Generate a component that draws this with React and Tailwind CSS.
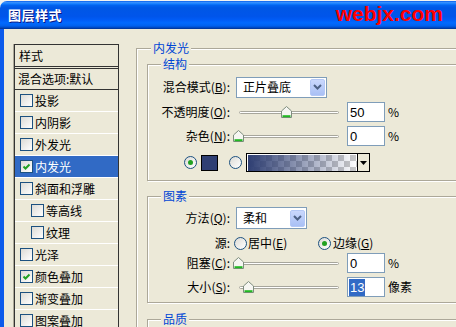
import React from 'react';

const items = [
  { t: '投影' },
  { t: '内阴影' },
  { t: '外发光' },
  { t: '内发光', checked: true, sel: true },
  { t: '斜面和浮雕' },
  { t: '等高线', indent: true },
  { t: '纹理', indent: true },
  { t: '光泽' },
  { t: '颜色叠加', checked: true },
  { t: '渐变叠加' },
  { t: '图案叠加' },
];

const Check = ({ checked }) => (
  <span className="flex h-[13px] w-[13px] shrink-0 items-center justify-center border border-[#1C5180] bg-[linear-gradient(135deg,#DCDBD5,#FFFFFF)]">
    {checked && (
      <svg width="9" height="9" viewBox="0 0 9 9">
        <path d="M1.5 4.5 L3.5 6.5 L7.5 2.5" fill="none" stroke="#21A121" strokeWidth="2" />
      </svg>
    )}
  </span>
);

const Radio = ({ checked, className = '' }) => (
  <span className={`flex h-[13px] w-[13px] shrink-0 items-center justify-center rounded-full border border-[#1C5180] bg-[linear-gradient(135deg,#DCDBD5,#FFFFFF)] ${className}`}>
    {checked && <span className="h-[5px] w-[5px] rounded-full bg-[#21A121]" />}
  </span>
);

const Key = ({ t, k }) => (
  <span>
    {t}(<u className="underline-offset-1">{k}</u>):
  </span>
);

const Group = ({ title, className = '', labelClass = 'ml-[13px]', children }) => (
  <div className={`shrink-0 border border-[#ACA899] shadow-[inset_1px_1px_0_#fff,1px_1px_0_#fff] ${className}`}>
    <div className={`-mt-[8px] h-[14px] w-fit bg-[#ECE9D8] px-[2px] leading-[14px] text-[#0046D5] ${labelClass}`}>{title}</div>
    {children}
  </div>
);

const Row = ({ label, className = '', children }) => (
  <div className={`flex items-center ${className}`}>
    <div className="w-[82px] shrink-0 text-right leading-none">{label}</div>
    {children}
  </div>
);

const Select = ({ value, className = '' }) => (
  <div className={`ml-[6px] flex shrink-0 items-center justify-between border border-[#7F9DB9] bg-white pl-[6px] pr-[1px] leading-none ${className}`}>
    <span>{value}</span>
    <span className="flex h-[17px] w-[15px] items-center justify-center rounded-[2px] border border-[#B4C8F6] bg-[linear-gradient(180deg,#CAD8FD,#A9C0F5)]">
      <svg width="9" height="6" viewBox="0 0 9 6">
        <path d="M1 1 L4.5 4.5 L8 1" fill="none" stroke="#4D6185" strokeWidth="2" />
      </svg>
    </span>
  </div>
);

const Slider = ({ pos }) => (
  <div className="relative ml-[6px] h-[12px] w-[111px] shrink-0">
    <div className="ml-[3px] mt-[5px] h-[3px] w-[100px] rounded-full border border-[#A7A69C] bg-white" />
    <svg className="absolute top-0" style={{ left: pos }} width="11" height="12" viewBox="0 0 11 12">
      <path d="M0.5 5 L5.5 0.5 L10.5 5 V11.5 H0.5 Z" fill="#F6F6F2" stroke="#7E8C7E" />
      <path d="M1.5 10.2 H9.5" stroke="#22B922" strokeWidth="2" />
    </svg>
  </div>
);

const Field = ({ value, selected, unit }) => (
  <>
    <div className="flex h-[20px] w-[38px] shrink-0 items-center border border-[#7F9DB9] bg-white pl-[1px] font-['Liberation_Sans',sans-serif] text-[13px] leading-none">
      <span className={selected ? 'bg-[#316AC5] px-[1px] py-[2px] text-white' : 'px-[1px]'}>{value}</span>
    </div>
    <span className="ml-[3px] leading-none">{unit}</span>
  </>
);

export default function App() {
  return (
    <div className="h-[327px] w-[456px] overflow-hidden bg-[#F2F2F0] font-['Noto_Sans_CJK_SC','Noto_Sans',sans-serif] text-[12px] text-black">
      <div className="mt-[1px] flex h-[28px] items-center justify-between rounded-tl-[7px] bg-[linear-gradient(180deg,#0A5FEB_0%,#3A93FF_6%,#127DFF_10%,#0262EE_16%,#0057E5_24%,#0055EB_56%,#005BF5_66%,#026AFE_78%,#0062EF_88%,#0052D6_93%,#0040AB_97%,#003092_100%)] pl-[8px] pr-[13px]">
        <span className="text-[13px] font-bold tracking-[0.5px] text-white [text-shadow:1px_1px_0_#0A1883]">图层样式</span>
        <span className="mt-[-3px] font-['Liberation_Sans',sans-serif] text-[21px] font-bold leading-none text-[#FF0000]">webjx.com</span>
      </div>

      <div className="flex h-[298px] items-start overflow-hidden border-l-4 border-[#0B5AEB] bg-[#ECE9D8]">
        <div className="ml-[10px] mt-[15px] w-[105px] shrink-0 border border-[#333] shadow-[-1px_0_0_#ACA899]">
          <div className="flex h-[22px] items-center border-b border-[#333] pl-[4px]">样式</div>
          <div className="mt-[1px] flex h-[22px] items-center border-y border-[#333] pl-[3px]">混合选项:默认</div>
          {items.map((it) => (
            <div
              key={it.t}
              className={`flex h-[22px] items-center border-b border-white ${it.indent ? 'pl-[16px]' : 'pl-[5px]'} ${it.sel ? 'bg-[#316AC5] text-white' : ''}`}
            >
              <Check checked={it.checked} />
              <span className="ml-[2px]">{it.t}</span>
            </div>
          ))}
        </div>

        <Group title="内发光" className="ml-[17px] mt-[19px] h-[330px] w-[340px]" labelClass="ml-[14px]">
          <Group title="结构" className="ml-[10px] mt-[9px] w-[340px] pb-[8px]">
            <Row label={<Key t="混合模式" k="B" />} className="mt-[5px] h-[22px]">
              <Select value="正片叠底" className="h-[21px] w-[91px]" />
            </Row>
            <Row label={<Key t="不透明度" k="O" />} className="mt-[4px] h-[20px]">
              <Slider pos={45} />
              <Field value="50" unit="%" />
            </Row>
            <Row label={<Key t="杂色" k="N" />} className="mt-[4px] h-[20px]">
              <Slider pos={-3} />
              <Field value="0" unit="%" />
            </Row>
            <div className="mt-[7px] flex h-[19px] items-center">
              <Radio checked className="ml-[36px]" />
              <span className="ml-[4px] h-[16px] w-[17px] border border-black bg-[#2F3F73]" />
              <Radio className="ml-[11px]" />
              <div className="ml-[4px] flex h-[19px] w-[124px] border border-black">
                <div className="flex-1 border-l border-t border-white [background:linear-gradient(to_right,#2F3F73,#2F3F7300),repeating-conic-gradient(#C8C8C8_0_25%,#FFFFFF_0_50%)_0_0/12px_12px]" />
                <div className="flex w-[12px] items-center justify-center border-l border-black bg-[#ECE9D8]">
                  <svg width="7" height="4" viewBox="0 0 7 4">
                    <path d="M0 0 H7 L3.5 4 Z" fill="#000" />
                  </svg>
                </div>
              </div>
            </div>
          </Group>

          <Group title="图素" className="ml-[10px] mt-[15px] w-[340px] pb-[5px]">
            <Row label={<Key t="方法" k="Q" />} className="mt-[4px] h-[22px]">
              <Select value="柔和" className="h-[22px] w-[71px]" />
            </Row>
            <Row label="源:" className="mt-[5px] h-[18px]">
              <div className="ml-[4px] flex w-[84px] shrink-0 items-center">
                <Radio />
                <span className="ml-[1px] leading-none">
                  居中(<u>E</u>)
                </span>
              </div>
              <Radio checked />
              <span className="ml-[2px] leading-none">
                边缘(<u>G</u>)
              </span>
            </Row>
            <Row label={<Key t="阻塞" k="C" />} className="mt-[1px] h-[20px]">
              <Slider pos={-3} />
              <Field value="0" unit="%" />
            </Row>
            <Row label={<Key t="大小" k="S" />} className="mt-[4px] h-[20px]">
              <Slider pos={7} />
              <Field value="13" unit="像素" selected />
            </Row>
          </Group>

          <Group title="品质" className="ml-[10px] mt-[16px] h-[40px] w-[340px]" />
        </Group>
      </div>
    </div>
  );
}
